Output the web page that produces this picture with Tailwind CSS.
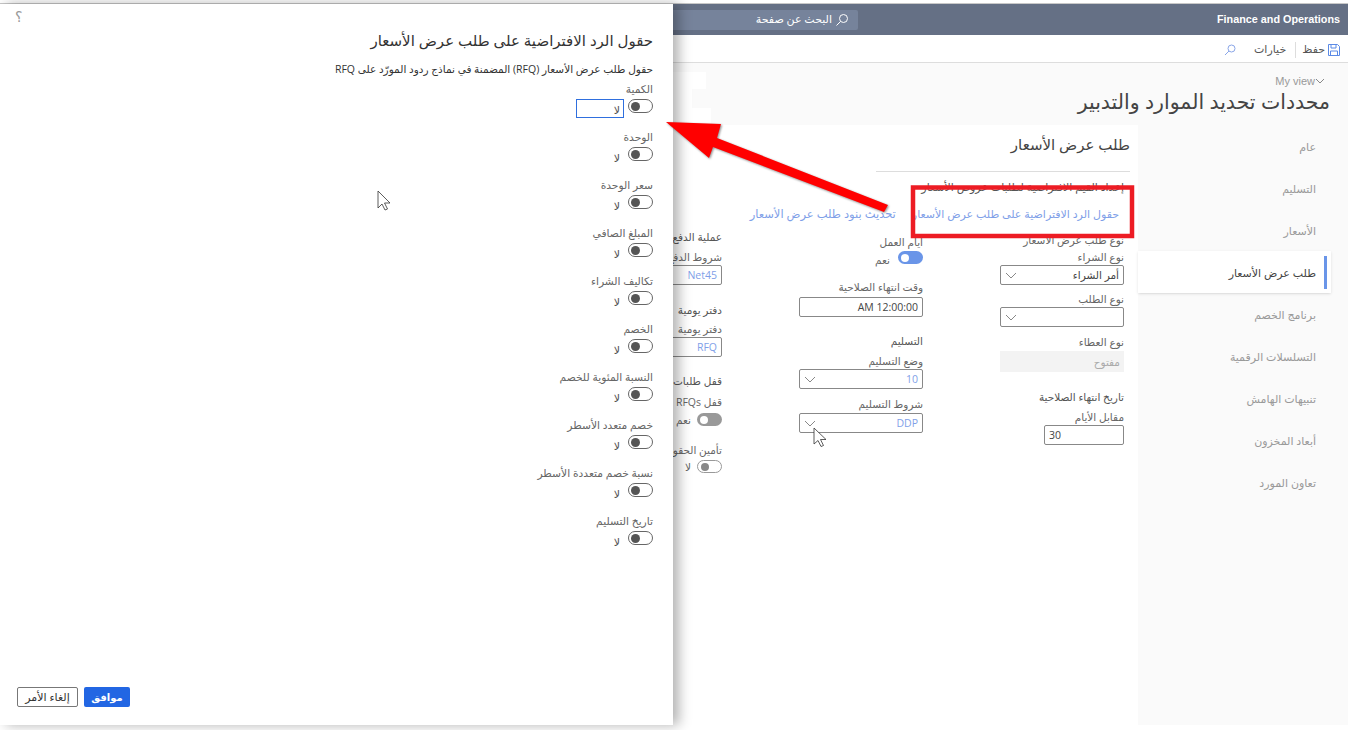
<!DOCTYPE html>
<html lang="ar">
<head>
<meta charset="UTF-8">
<title>حقول الرد الافتراضية</title>
<script src="https://cdn.jsdelivr.net/npm/@tailwindcss/browser@4"></script>
</head>
<body class="bg-white">
<div class="relative h-[730px] w-[1348px] overflow-hidden font-['Open_Sans','DejaVu_Sans',sans-serif] text-[#444]">
  <div class="mt-[3px] flex h-[722px] border-t border-[#c8c8c8]">

    <!-- dialog -->
    <aside dir="rtl" class="relative z-10 flex h-full w-[673px] shrink-0 flex-col bg-white pr-5 pt-[24px] shadow-[6px_0_12px_rgba(0,0,0,0.3)]">
      <h2 class="text-[15px] leading-6 text-[#333]">حقول الرد الافتراضية على طلب عرض الأسعار</h2>
      <p class="mt-[9px] text-[10.5px] leading-4 text-[#333]">حقول طلب عرض الأسعار (RFQ) المضمنة في نماذج ردود المورّد على RFQ</p>
      <div class="mt-[4px] flex flex-col">
        <div class="h-[48px]">
          <div class="text-[10.7px] leading-4 text-[#666]">الكمية</div>
          <div class="flex items-start gap-1 pt-[2px]">
            <span class="flex h-[14px] w-[25px] items-center justify-end rounded-full border border-[#666] px-[2px]"><i class="size-[9px] rounded-full bg-[#555]"></i></span>
            <span class="h-[19px] w-[48px] border border-[#2f6fde] pr-[3px] text-[11px] leading-[20px] text-[#555]">لا</span>
          </div>
        </div>
        <div class="h-[48px]">
          <div class="text-[10.7px] leading-4 text-[#666]">الوحدة</div>
          <div class="flex items-start gap-[8px] pt-[2px]">
            <span class="flex h-[14px] w-[25px] items-center justify-end rounded-full border border-[#666] px-[2px]"><i class="size-[9px] rounded-full bg-[#555]"></i></span>
            <span class="pt-px text-[11px] leading-[20px] text-[#555]">لا</span>
          </div>
        </div>
        <div class="h-[48px]">
          <div class="text-[10.7px] leading-4 text-[#666]">سعر الوحدة</div>
          <div class="flex items-start gap-[8px] pt-[2px]">
            <span class="flex h-[14px] w-[25px] items-center justify-end rounded-full border border-[#666] px-[2px]"><i class="size-[9px] rounded-full bg-[#555]"></i></span>
            <span class="pt-px text-[11px] leading-[20px] text-[#555]">لا</span>
          </div>
        </div>
        <div class="h-[48px]">
          <div class="text-[10.7px] leading-4 text-[#666]">المبلغ الصافي</div>
          <div class="flex items-start gap-[8px] pt-[2px]">
            <span class="flex h-[14px] w-[25px] items-center justify-end rounded-full border border-[#666] px-[2px]"><i class="size-[9px] rounded-full bg-[#555]"></i></span>
            <span class="pt-px text-[11px] leading-[20px] text-[#555]">لا</span>
          </div>
        </div>
        <div class="h-[48px]">
          <div class="text-[10.7px] leading-4 text-[#666]">تكاليف الشراء</div>
          <div class="flex items-start gap-[8px] pt-[2px]">
            <span class="flex h-[14px] w-[25px] items-center justify-end rounded-full border border-[#666] px-[2px]"><i class="size-[9px] rounded-full bg-[#555]"></i></span>
            <span class="pt-px text-[11px] leading-[20px] text-[#555]">لا</span>
          </div>
        </div>
        <div class="h-[48px]">
          <div class="text-[10.7px] leading-4 text-[#666]">الخصم</div>
          <div class="flex items-start gap-[8px] pt-[2px]">
            <span class="flex h-[14px] w-[25px] items-center justify-end rounded-full border border-[#666] px-[2px]"><i class="size-[9px] rounded-full bg-[#555]"></i></span>
            <span class="pt-px text-[11px] leading-[20px] text-[#555]">لا</span>
          </div>
        </div>
        <div class="h-[48px]">
          <div class="text-[10.7px] leading-4 text-[#666]">النسبة المئوية للخصم</div>
          <div class="flex items-start gap-[8px] pt-[2px]">
            <span class="flex h-[14px] w-[25px] items-center justify-end rounded-full border border-[#666] px-[2px]"><i class="size-[9px] rounded-full bg-[#555]"></i></span>
            <span class="pt-px text-[11px] leading-[20px] text-[#555]">لا</span>
          </div>
        </div>
        <div class="h-[48px]">
          <div class="text-[10.7px] leading-4 text-[#666]">خصم متعدد الأسطر</div>
          <div class="flex items-start gap-[8px] pt-[2px]">
            <span class="flex h-[14px] w-[25px] items-center justify-end rounded-full border border-[#666] px-[2px]"><i class="size-[9px] rounded-full bg-[#555]"></i></span>
            <span class="pt-px text-[11px] leading-[20px] text-[#555]">لا</span>
          </div>
        </div>
        <div class="h-[48px]">
          <div class="text-[10.7px] leading-4 text-[#666]">نسبة خصم متعددة الأسطر</div>
          <div class="flex items-start gap-[8px] pt-[2px]">
            <span class="flex h-[14px] w-[25px] items-center justify-end rounded-full border border-[#666] px-[2px]"><i class="size-[9px] rounded-full bg-[#555]"></i></span>
            <span class="pt-px text-[11px] leading-[20px] text-[#555]">لا</span>
          </div>
        </div>
        <div class="h-[48px]">
          <div class="text-[10.7px] leading-4 text-[#666]">تاريخ التسليم</div>
          <div class="flex items-start gap-[8px] pt-[2px]">
            <span class="flex h-[14px] w-[25px] items-center justify-end rounded-full border border-[#666] px-[2px]"><i class="size-[9px] rounded-full bg-[#555]"></i></span>
            <span class="pt-px text-[11px] leading-[20px] text-[#555]">لا</span>
          </div>
        </div>
      </div>
      <div class="mt-auto flex justify-end gap-[6px] pb-[18px] pl-[17px]">
        <button class="h-5 w-[46px] rounded-[2px] bg-[#2266e3] text-[10px] font-bold text-white">موافق</button>
        <button class="h-5 w-[61px] rounded-[2px] border border-[#777] bg-white text-[11px] text-[#333]">إلغاء الأمر</button>
      </div>
      <span class="absolute left-[15px] top-[5px] text-[14px] leading-4 text-[#999]">؟</span>
    </aside>

    <!-- page behind the dialog -->
    <main class="flex min-w-0 flex-1 flex-col bg-[#fafafa]">
      <header class="flex h-[31px] shrink-0 items-center justify-between bg-[#657085] pr-2">
        <div dir="rtl" class="flex h-[20px] w-[185px] items-center gap-[3px] rounded-r-[2px] bg-[#76839b] px-[9px] text-[11px] text-white">
          <svg class="size-[14px]" viewBox="0 0 14 14" fill="none" stroke="#fff" stroke-width="1"><circle cx="8.5" cy="5.5" r="4"/><path d="M5.5 8.5 1.5 12.5"/></svg>
          <span>البحث عن صفحة</span>
        </div>
        <span class="font-['Liberation_Sans',sans-serif] text-[10.8px] font-bold text-white">Finance and Operations</span>
      </header>
      <div dir="rtl" class="flex h-[28px] shrink-0 items-center border-b border-[#ddd] bg-white pr-[8px] pt-[2px] text-[11px] text-[#555]">
        <svg class="size-[12px]" viewBox="0 0 12 12" fill="none" stroke="#5b8ae6" stroke-width="1"><path d="M.5.5h9l2 2v9H.5zM3 .5v3.5h5V.5M2.500 11.500V7h7v4.500"/></svg>
        <span class="mr-[3px]">حفظ</span>
        <i class="mr-[6px] h-[16px] w-px bg-[#ddd]"></i>
        <span class="mr-[9px]">خيارات</span>
        <svg class="mr-[18px] size-[12px]" viewBox="0 0 12 12" fill="none" stroke="#8aa6e8" stroke-width="1"><circle cx="7.500" cy="4.500" r="3.500"/><path d="M5 7 1 11"/></svg>
      </div>
      <div dir="rtl" class="relative h-[62px] shrink-0 pr-[18px] pt-[11px]">
        <div class="flex items-center pr-[5px] font-['Liberation_Sans',sans-serif] text-[11px] leading-[14px] text-[#999]">
          <svg class="size-[10px]" viewBox="0 0 10 10" fill="none" stroke="#888" stroke-width="1"><path d="M1 3l4 4 4-4"/></svg>
          <span dir="ltr">My view</span>
        </div>
        <h1 class="-mt-px text-[20.5px] leading-[28px] text-[#444]">محددات تحديد الموارد والتدبير</h1>
        <i class="absolute left-0 top-[9px] h-[17px] w-[33px] bg-white"></i>
        <i class="absolute left-0 top-[26px] h-[19px] w-[19px] bg-white"></i>
        <i class="absolute left-0 top-[45px] h-[17px] w-[38px] bg-white"></i>
      </div>
      <div dir="rtl" class="flex min-h-0 flex-1">
        <nav class="w-[210px] shrink-0 bg-[#fafafa] pr-[17px] text-[11px] text-[#999]">
          <div class="flex h-[42px] items-center pr-[15px] pt-[2px]">عام</div>
          <div class="flex h-[42px] items-center pr-[15px] pt-[2px]">التسليم</div>
          <div class="flex h-[42px] items-center pr-[15px] pt-[2px]">الأسعار</div>
          <div class="relative flex h-[42px] items-center bg-white pr-[15px] pt-[2px] text-[#444] shadow-sm"><i class="absolute right-[4px] top-[5px] h-[33px] w-[3px] bg-[#6a95e8]"></i>طلب عرض الأسعار</div>
          <div class="flex h-[42px] items-center pr-[15px] pt-[2px]">برنامج الخصم</div>
          <div class="flex h-[42px] items-center pr-[15px] pt-[2px]">التسلسلات الرقمية</div>
          <div class="flex h-[42px] items-center pr-[15px] pt-[2px]">تنبيهات الهامش</div>
          <div class="flex h-[42px] items-center pr-[15px] pt-[2px]">أبعاد المخزون</div>
          <div class="flex h-[42px] items-center pr-[15px] pt-[2px]">تعاون المورد</div>
        </nav>
        <section class="min-w-0 flex-1 overflow-hidden bg-white pr-[8px] pt-[8px]">
          <h2 class="text-[15px] leading-[22px] text-[#444]">طلب عرض الأسعار</h2>
          <div class="mt-[16px] w-[254px] border-t border-[#ddd]"></div>
          <div class="mt-[7px] pr-[6px] text-[11px] leading-4 text-[#555]">إعداد القيم الافتراضية لطلبات عروض الأسعار</div>
          <div class="mt-[11px] flex gap-[16px] pr-[11px] text-[11px] leading-4 whitespace-nowrap text-[#7f9fe8]">
            <span>حقول الرد الافتراضية على طلب عرض الأسعار</span>
            <span class="text-[11.5px]">تحديث بنود طلب عرض الأسعار</span>
          </div>
          <div class="mt-[11px] flex gap-[77px] pr-[6px] whitespace-nowrap text-[10.5px] leading-[14px] text-[#666]">
            <div class="w-[124px] shrink-0">
              <div>نوع طلب عرض الأسعار</div>
              <div class="mt-[3px]">نوع الشراء</div>
              <div class="mt-px flex h-5 items-center justify-between rounded-[2px] border border-[#888] px-1 text-[#444]"><span>أمر الشراء</span><svg class="size-3" viewBox="0 0 12 12" fill="none" stroke="#888"><path d="M1 4l5 5 5-5"/></svg></div>
              <div class="mt-[7px]">نوع الطلب</div>
              <div class="mt-px flex h-5 items-center justify-end rounded-[2px] border border-[#888] px-1"><svg class="size-3" viewBox="0 0 12 12" fill="none" stroke="#888"><path d="M1 4l5 5 5-5"/></svg></div>
              <div class="mt-[8px]">نوع العطاء</div>
              <div class="mt-[2px] flex h-[21px] items-center bg-[#f3f3f3] px-1 text-[#aaa]">مفتوح</div>
              <div class="mt-[18px] text-[#555]">تاريخ انتهاء الصلاحية</div>
              <div class="mt-[6px]">مقابل الأيام</div>
              <div class="mt-px flex h-5 w-[80px] items-center justify-end rounded-[2px] border border-[#888] px-1 text-[#444]">30</div>
            </div>
            <div class="w-[124px] shrink-0 pt-[2px]">
              <div>أيام العمل</div>
              <div class="flex h-[17px] items-center gap-[8px]"><span class="flex h-[13px] w-[25px] items-center justify-end rounded-full bg-[#6a95e8] px-[3px]"><i class="size-[8px] rounded-full bg-white"></i></span><span class="pt-1">نعم</span></div>
              <div class="mt-[14px]">وقت انتهاء الصلاحية</div>
              <div class="mt-[3px] flex h-5 items-center rounded-[2px] border border-[#888] px-1 text-[#444]"><span dir="ltr">AM 12:00:00</span></div>
              <div class="mt-[17px] text-[#555]">التسليم</div>
              <div class="mt-[6px]">وضع التسليم</div>
              <div class="mt-px flex h-5 items-center justify-between rounded-[2px] border border-[#888] px-1 text-[#7f9fe8]"><span>10</span><svg class="size-3" viewBox="0 0 12 12" fill="none" stroke="#888"><path d="M1 4l5 5 5-5"/></svg></div>
              <div class="mt-[8px]">شروط التسليم</div>
              <div class="mt-[2px] flex h-5 items-center justify-between rounded-[2px] border border-[#888] px-1 text-[#7f9fe8]"><span>DDP</span><svg class="size-3" viewBox="0 0 12 12" fill="none" stroke="#888"><path d="M1 4l5 5 5-5"/></svg></div>
            </div>
            <div class="-mt-[3px] w-[124px] shrink-0">
              <div class="text-[#555]">عملية الدفع</div>
              <div class="mt-[6px]">شروط الدفع</div>
              <div class="mt-px flex h-5 items-center rounded-[2px] border border-[#888] px-1 text-[#7f9fe8]">Net45</div>
              <div class="mt-[18px] text-[#555]">دفتر يومية</div>
              <div class="mt-[5px]">دفتر يومية</div>
              <div class="mt-px flex h-5 items-center rounded-[2px] border border-[#888] px-1 text-[#7f9fe8]">RFQ</div>
              <div class="mt-[17px] text-[#555]">قفل طلبات</div>
              <div class="mt-[7px]">قفل RFQs</div>
              <div class="mt-[2px] flex h-[17px] items-center gap-[6px]"><span class="flex h-[13px] w-[25px] items-center justify-end rounded-full bg-[#999] px-[3px]"><i class="size-[8px] rounded-full bg-white"></i></span><span>نعم</span></div>
              <div class="mt-[15px]">تأمين الحقول</div>
              <div class="mt-px flex h-[17px] items-center gap-[6px]"><span class="flex h-[13px] w-[25px] items-center justify-end rounded-full border border-[#999] px-[3px]"><i class="size-[8px] rounded-full bg-[#888]"></i></span><span>لا</span></div>
            </div>
          </div>
        </section>
      </div>
    </main>
  </div>

  <!-- annotation over the screenshot -->
  <svg class="absolute left-0 top-0 z-20" width="1348" height="730" viewBox="0 0 1348 730" fill="none">
    <rect x="913" y="187.500" width="219" height="48.500" stroke="#ed1c24" stroke-width="4.500"/>
    <path class="drop-shadow-[1px_1px_1px_rgba(0,0,0,0.45)]" d="M666 122 721 124 717 138 888 205 884 212 713 147 709 158Z" fill="#ff0000"/>
    <path d="M378 191v17l4-4 3 6 2.500-1-3-6h5.500z" fill="#fff" stroke="#333" stroke-width="0.800"/>
    <path d="M814 428v16l4-3.500 3 6 2.500-1-3-6h5.500z" fill="#fff" stroke="#333" stroke-width="0.800"/>
  </svg>
</div>
</body>
</html>
